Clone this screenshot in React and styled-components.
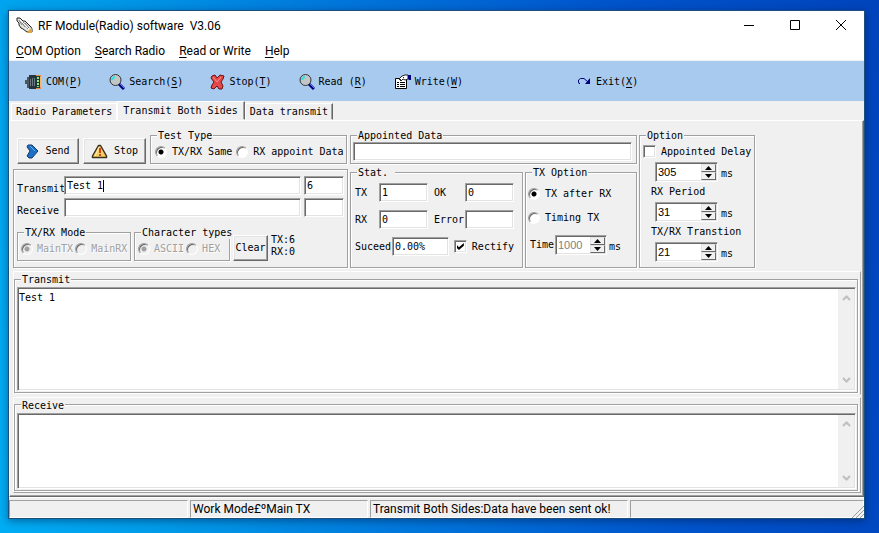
import React, { useState } from 'react';
import styled, { createGlobalStyle, css } from 'styled-components';

const FACE = '#f0f0f0';
const SHADOW = '#a0a0a0';
const DARK = '#696969';
const LIGHT = '#ffffff';
const MIDLIGHT = '#e3e3e3';
const TOOLBAR = '#a8caef';

const MONO = '"DejaVu Sans Mono", "Liberation Mono", monospace';
const UI = 'Roboto, "Noto Sans", sans-serif';
const SANS = '"Liberation Sans", Arial, sans-serif';

const GlobalStyle = createGlobalStyle`
  * {
    box-sizing: border-box;
  }
  body {
    margin: 0;
    color: #000;
    font: 10px/12px ${MONO};
  }
  button, input, textarea {
    margin: 0;
    padding: 0;
    border: 0;
    border-radius: 0;
    color: inherit;
    font: inherit;
    outline: none;
  }
`;

const sunken = css`
  border: 1px solid;
  border-color: ${SHADOW} ${LIGHT} ${LIGHT} ${SHADOW};
  box-shadow: inset 1px 1px 0 ${DARK}, inset -1px -1px 0 ${MIDLIGHT};
`;

const raised = css`
  border: 1px solid;
  border-color: ${LIGHT} ${DARK} ${DARK} ${LIGHT};
  box-shadow: inset -1px -1px 0 ${SHADOW}, inset 1px 1px 0 ${MIDLIGHT};
`;

const etched = css`
  border: 1px solid ${SHADOW};
  box-shadow: inset 1px 1px 0 ${LIGHT}, 1px 1px 0 ${LIGHT};
`;

const Desktop = styled.div`
  display: flex;
  height: 100vh;
  min-height: 520px;
  padding: 10px 14px 14px 8px;
  background: linear-gradient(82deg, #00adf4 0%, #009ae8 18%, #0078dc 42%, #0054cc 72%, #0044bc 100%);
`;

const Window = styled.main`
  display: flex;
  flex: 1;
  flex-direction: column;
  min-width: 0;
  border: 1px solid #1c4f7c;
  background: ${FACE};
  box-shadow: 0 2px 8px rgba(0, 20, 60, 0.45);
`;

const TitleBar = styled.header`
  display: flex;
  align-items: center;
  height: 29px;
  padding-left: 7px;
  background: #fff;
`;

const Title = styled.h1`
  flex: 1;
  margin: 0 0 0 5px;
  font: 12px/16px ${UI};
  white-space: pre;
`;

const CaptionButton = styled.button`
  display: flex;
  align-items: center;
  justify-content: center;
  width: 46px;
  height: 29px;
  background: #fff;
`;

const MenuBar = styled.nav`
  display: flex;
  gap: 14px;
  height: 21px;
  padding: 2px 7px 0;
  border-bottom: 1px solid ${FACE};
  background: #fff;
`;

const MenuItem = styled.button`
  background: none;
  font: 12px/16px ${UI};
  text-align: left;
`;

const ToolBar = styled.div`
  display: flex;
  flex-shrink: 0;
  align-items: center;
  gap: 27px;
  height: 40px;
  padding: 2px 0 0 16px;
  background: ${TOOLBAR};
`;

const ToolButton = styled.button`
  display: flex;
  align-items: center;
  gap: 4px;
  margin-left: ${({ $apart }) => ($apart ? '86px' : '0')};
  background: none;
  white-space: pre;
`;

const Key = styled.u`
  text-underline-offset: 2px;
`;

const TabStrip = styled.div`
  display: flex;
  align-items: flex-end;
  height: 19px;
  padding-left: 2px;
`;

const Tab = styled.button`
  height: ${({ $active }) => ($active ? '19px' : '17px')};
  padding: ${({ $active }) => ($active ? '0 6px 0 5px' : '0 4px')};
  border: 1px solid;
  border-color: ${LIGHT} ${DARK} transparent ${LIGHT};
  border-right-color: ${({ $first }) => ($first ? LIGHT : DARK)};
  background: ${FACE};
  box-shadow: ${({ $first }) => ($first ? 'none' : `inset -1px 0 0 ${SHADOW}`)};
`;

const Page = styled.section`
  display: flex;
  flex: 1;
  flex-direction: column;
  min-height: 0;
  padding: 7px 2px 3px 3px;
  border: 1px solid;
  border-color: ${LIGHT} ${DARK} ${DARK} ${LIGHT};
  box-shadow: inset -1px -1px 0 ${SHADOW};
`;

const Controls = styled.div`
  display: grid;
  flex-shrink: 0;
  grid-template-columns: 335px 173px 112px 116px;
  grid-template-rows: 36px 103px;
  grid-template-areas:
    'actions data data option'
    'link stat txoption option';
  gap: 1px 2px;
`;

const GroupBox = styled.fieldset`
  grid-area: ${({ $area }) => $area || 'auto'};
  display: flex;
  flex: ${({ $grow }) => $grow || '0 0 auto'};
  flex-direction: column;
  min-width: 0;
  min-height: 0;
  margin: 0;
  padding: 0;
  ${etched}
`;

const Legend = styled.legend`
  margin-left: 6px;
  padding: 2px 1px 0;
  background: ${FACE};
  white-space: pre;
`;

const Actions = styled.div`
  grid-area: actions;
  display: flex;
  align-items: flex-end;
  gap: 4px;
  padding: 0 1px 0 4px;
`;

const PushButton = styled.button`
  display: flex;
  align-items: center;
  justify-content: center;
  gap: 6px;
  width: ${({ $width }) => $width}px;
  height: 26px;
  background: ${FACE};
  ${raised}
`;

const TestType = styled(GroupBox)`
  flex: 1;
  height: 36px;
`;

const Choices = styled.div`
  display: flex;
  align-items: center;
  gap: ${({ $gap }) => $gap}px;
  padding: 3px 0 3px ${({ $gap }) => $gap}px;
`;

const Choice = styled.label`
  display: flex;
  align-items: center;
  gap: ${({ $tight }) => ($tight ? '4px' : '5px')};
  height: 13px;
  color: ${({ $off }) => ($off ? SHADOW : 'inherit')};
  text-shadow: ${({ $off }) => ($off ? `1px 1px 0 ${LIGHT}` : 'none')};
  white-space: nowrap;
`;

const RadioDot = styled.input.attrs({ type: 'radio' })`
  flex: none;
  width: 12px;
  height: 12px;
  appearance: none;
  border: 1px solid;
  border-color: ${SHADOW} ${LIGHT} ${LIGHT} ${SHADOW};
  border-radius: 50%;
  background: #fff;
  box-shadow: inset 1px 1px 0 ${DARK};

  &:checked {
    background: radial-gradient(circle, #000 0 2px, #fff 3px);
  }
  &:disabled {
    background: ${FACE};
  }
  &:disabled:checked {
    background: radial-gradient(circle, ${SHADOW} 0 2px, ${FACE} 3px);
  }
`;

const TickBox = styled.input.attrs({ type: 'checkbox' })`
  display: flex;
  align-items: center;
  justify-content: center;
  flex: none;
  width: 13px;
  height: 13px;
  appearance: none;
  background: #fff;
  ${sunken}

  &:checked::after {
    content: '';
    width: 7px;
    height: 7px;
    background: #000;
    clip-path: polygon(0 30%, 30% 60%, 100% 0, 100% 40%, 30% 100%, 0 70%);
  }
`;

const LinkPanel = styled.div`
  grid-area: link;
  display: flex;
  flex-direction: column;
  gap: 3px;
  align-self: end;
  height: 99px;
  padding: 6px 3px 0;
  ${etched}
`;

const LineRow = styled.div`
  display: grid;
  grid-template-columns: 47px 1fr 40px;
  align-items: center;
`;

const LineLabel = styled.label`
  padding-top: 6px;
`;

const Field = styled.div`
  position: relative;
  display: flex;
  padding-right: 3px;
`;

const TextBox = styled.input`
  width: 100%;
  min-width: 0;
  height: 19px;
  padding: 0 2px 1px;
  background: #fff;
  ${sunken}
`;

const Caret = styled.span`
  position: absolute;
  top: 4px;
  left: calc(3px + 6ch);
  width: 1px;
  height: 12px;
  background: #000;
`;

const ModeRow = styled.div`
  display: flex;
  align-items: flex-end;
  gap: 3px;
  padding-top: 5px;
`;

const ModeBox = styled(GroupBox)`
  width: ${({ $width }) => $width}px;
  height: 36px;
`;

const ModeChoices = styled(Choices)`
  padding-left: 3px;
`;

const Counter = styled.output`
  padding-bottom: 3px;
  white-space: pre;
`;

const DataBody = styled.div`
  padding: 0 4px 0 2px;
`;

const StatBody = styled.div`
  display: flex;
  flex-direction: column;
  gap: 8px;
  padding: 4px 8px 0 4px;
`;

const StatPair = styled.div`
  display: flex;
  align-items: center;
`;

const StatLabel = styled.label`
  flex: none;
  width: ${({ $width }) => $width}px;
`;

const StatLine = styled.div`
  display: flex;
  align-items: center;
  justify-content: space-between;
`;

const StatBox = styled(TextBox)`
  width: ${({ $width }) => $width}px;
`;

const TxOptionBody = styled.div`
  display: flex;
  flex-direction: column;
  gap: 11px;
  padding: 8px 0 0 2px;
`;

const SpinLine = styled.div`
  display: flex;
  align-items: center;
  gap: ${({ $gap }) => $gap}px;
  padding-left: ${({ $indent }) => $indent}px;
`;

const Unit = styled.span`
  padding-top: 3px;
`;

const SpinFrame = styled.div`
  display: flex;
  width: ${({ $width }) => $width}px;
  height: 20px;
  padding: 1px;
  background: #fff;
  ${sunken}
`;

const SpinInput = styled.input`
  flex: 1;
  min-width: 0;
  margin: 1px;
  background: #fff;
  font: 11px/14px ${SANS};

  &:disabled {
    color: #808080;
  }
`;

const SpinButtons = styled.div`
  display: grid;
  grid-template-rows: 1fr 1fr;
  width: 15px;
`;

const SpinButton = styled.button`
  display: flex;
  align-items: center;
  justify-content: center;
  min-height: 0;
  border: 1px solid;
  border-color: ${MIDLIGHT} ${DARK} ${DARK} ${MIDLIGHT};
  background: ${FACE};
`;

const OptionBody = styled.div`
  display: flex;
  flex-direction: column;
  gap: 4px;
  padding: 3px 0 0 3px;
`;

const OptionLabel = styled.label`
  padding-left: 8px;
`;

const Memos = styled.div`
  display: flex;
  flex: 1;
  flex-direction: column;
  gap: 2px;
  min-height: 0;
  padding-top: 3px;
`;

const MemoPanel = styled.div`
  display: flex;
  flex: ${({ $grow }) => $grow} 1 0;
  min-height: 0;
  padding: 0 2px 1px 0;
  border: 1px solid;
  border-color: ${LIGHT} ${SHADOW} ${({ $last }) => ($last ? SHADOW : FACE)} ${LIGHT};
`;

const MemoFrame = styled.div`
  display: flex;
  flex: 1;
  min-height: 0;
  margin: 1px 1px 1px 2px;
  padding: 1px;
  background: #fff;
  ${sunken}
`;

const MemoText = styled.textarea`
  flex: 1;
  padding: 3px 0;
  overflow: hidden;
  background: #fff;
  resize: none;
`;

const MemoScroll = styled.div`
  display: flex;
  flex-direction: column;
  justify-content: space-between;
  width: 16px;
  background: ${FACE};
`;

const ScrollButton = styled.button`
  display: flex;
  align-items: center;
  justify-content: center;
  height: 18px;
  background: none;
`;

const StatusBar = styled.footer`
  position: relative;
  display: grid;
  grid-template-columns: 179px 178px 258px 1fr;
  flex-shrink: 0;
  gap: 2px;
  height: 21px;
  padding-top: 2px;
  border-top: 1px solid ${LIGHT};
`;

const StatusCell = styled.div`
  padding-left: 2px;
  overflow: hidden;
  border: 1px solid;
  border-color: ${SHADOW} ${LIGHT} ${LIGHT} ${SHADOW};
  font: 12px/16px ${UI};
  white-space: nowrap;
`;

const Grip = styled.svg`
  position: absolute;
  right: 0;
  bottom: 0;
`;

const AppIcon = () => (
  <svg width="17" height="17" viewBox="0 0 17 17" aria-hidden="true">
    <path d="M1 1H4L7 4L9 4L15 10L16 12V15H11L7 12L5 11L3 8V6L1 4Z" fill="#e4e4e0" stroke="#222" />
    <path d="M3 3l3 5M5 4l4 6M7 5l5 7M9 6l4 5" stroke="#7a7a78" />
    <path d="M4 3l9 9" stroke="#fff" />
    <path d="M11 16l2-3 3-2v5z" fill="#e0a63a" />
  </svg>
);

const PortIcon = () => (
  <svg width="17" height="16" viewBox="0 0 17 16" aria-hidden="true">
    <path d="M0 6h3v4H0z" fill="#4d565c" />
    <path d="M2 3h4v11H2z" fill="#4d565c" />
    <path d="M4 1h8v14H4z" fill="#27343b" />
    <path d="M5 5h1v7H5zM7 4h1v8H7zM9 4h1v8H9z" fill="#6d7c84" />
    <path d="M11 1h5v14h-5z" fill="#e98b4d" />
    <path d="M11 2h4v12h-4z" fill="#193d35" />
    <path d="M12 3h2v2h-2zM12 6h2v2h-2zM12 9h2v2h-2zM12 12h2v1h-2z" fill="#8fe87c" />
    <path d="M15 3h1v10h-1z" fill="#ffb070" />
  </svg>
);

const LensIcon = () => (
  <svg width="16" height="16" viewBox="0 0 16 16" aria-hidden="true">
    <path d="M10 10l5 5" stroke="#000080" strokeWidth="3" />
    <path d="M11 10l4 4" stroke="#6f74e0" />
    <circle cx="6.5" cy="6" r="5.5" fill="#c2c6c6" stroke="#333" />
    <path d="M3 6a3.500 3.500 0 0 1 3-3" fill="none" stroke="#35e0e0" strokeWidth="2" />
  </svg>
);

const CrossIcon = () => (
  <svg width="15" height="16" viewBox="0 0 15 16" aria-hidden="true">
    <path
      d="M2 2L5 1L7 4L10 1L14 2L13 5L11 8L13 12L12 15H9L7 12L4 15L1 14L2 11L4 8L1 4Z"
      fill="#e54848"
      stroke="#6c1010"
    />
    <path d="M3 3l4 5 4-5" fill="none" stroke="#ff8c80" />
  </svg>
);

const SheetIcon = () => (
  <svg width="17" height="16" viewBox="0 0 17 16" aria-hidden="true">
    <path d="M1.500 4.500h11v10h-11z" fill="#fff" stroke="#000" />
    <path d="M3 8.500h2M6 8.500h5M3 10.500h2M6 10.500h5M3 12.500h2M6 12.500h5" stroke="#000" />
    <path d="M5 5l3-3 3-1h3v4l-3 1-2-1-2 2z" fill="#fff" stroke="#222" />
    <path d="M6 6l1-1M8 6l1-1M9 4l1-1" stroke="#222" />
    <path d="M14 1h3v5h-2l-1-1z" fill="#000080" />
  </svg>
);

const RedoIcon = () => (
  <svg width="16" height="16" viewBox="0 0 16 16" aria-hidden="true">
    <path d="M4 9.500H3L2.500 8V6L4.500 4.500H8L12 8" fill="none" stroke="#000080" />
    <path d="M14 4v6H9z" fill="#000080" />
  </svg>
);

const ChevronIcon = () => (
  <svg width="13" height="15" viewBox="0 0 13 15" aria-hidden="true">
    <path d="M2 1h4l6 6-6 7H3L1 12l3-5-3-4z" fill="#1c6fc4" stroke="#123a70" />
    <path d="M4 2l5 5" stroke="#5fb0f0" />
  </svg>
);

const WarningIcon = () => (
  <svg width="17" height="15" viewBox="0 0 17 15" aria-hidden="true">
    <path d="M7.500 1.500h2L15.500 12v1.500h-14V12z" fill="#f5cf63" stroke="#3a3020" strokeWidth="1.5" strokeLinejoin="round" />
    <path d="M8 3L4 12" stroke="#fff0b8" />
    <path d="M8 4h2v5H8zM8 10h2v2H8z" fill="#d0451b" />
  </svg>
);

const Arrow = ({ down }) => (
  <svg width="7" height="4" viewBox="0 0 7 4" aria-hidden="true">
    <path d={down ? 'M0 0h7L3.500 4z' : 'M0 4h7L3.500 0z'} fill="#000" />
  </svg>
);

const ScrollArrow = ({ down }) => (
  <svg width="9" height="6" viewBox="0 0 9 6" aria-hidden="true">
    <path d={down ? 'M1 1l3.500 3.500L8 1' : 'M1 5l3.500-3.500L8 5'} fill="none" stroke="#bfbfbf" strokeWidth="2" />
  </svg>
);

const Radio = ({ name, label, defaultChecked, disabled, tight }) => (
  <Choice $off={disabled} $tight={tight}>
    <RadioDot name={name} defaultChecked={defaultChecked} disabled={disabled} />
    {label}
  </Choice>
);

const Spinner = ({ id, start, width, disabled }) => {
  const [value, setValue] = useState(start);
  return (
    <SpinFrame $width={width}>
      <SpinInput id={id} value={value} disabled={disabled} onChange={(e) => setValue(e.target.value)} />
      <SpinButtons>
        <SpinButton aria-label="Increase" disabled={disabled} onClick={() => setValue(Number(value) + 1)}>
          <Arrow />
        </SpinButton>
        <SpinButton aria-label="Decrease" disabled={disabled} onClick={() => setValue(Number(value) - 1)}>
          <Arrow down />
        </SpinButton>
      </SpinButtons>
    </SpinFrame>
  );
};

const DelayLine = ({ id, start }) => (
  <SpinLine $gap={3} $indent={12}>
    <Spinner id={id} start={start} width={63} />
    <Unit>ms</Unit>
  </SpinLine>
);

const Stat = ({ id, label, labelWidth, width, value }) => (
  <StatPair>
    <StatLabel htmlFor={id} $width={labelWidth}>{label}</StatLabel>
    <StatBox id={id} $width={width} defaultValue={value} />
  </StatPair>
);

const Memo = ({ title, grow, last, text }) => (
  <MemoPanel $grow={grow} $last={last}>
    <GroupBox $grow="1">
      <Legend>{title}</Legend>
      <MemoFrame>
        <MemoText aria-label={title} defaultValue={text} />
        <MemoScroll>
          <ScrollButton aria-label="Scroll up"><ScrollArrow /></ScrollButton>
          <ScrollButton aria-label="Scroll down"><ScrollArrow down /></ScrollButton>
        </MemoScroll>
      </MemoFrame>
    </GroupBox>
  </MemoPanel>
);

const TOOLS = [
  { icon: PortIcon, text: 'COM', mnemonic: 'P' },
  { icon: LensIcon, text: 'Search', mnemonic: 'S' },
  { icon: CrossIcon, text: 'Stop', mnemonic: 'T' },
  { icon: LensIcon, text: 'Read ', mnemonic: 'R' },
  { icon: SheetIcon, text: 'Write', mnemonic: 'W' },
  { icon: RedoIcon, text: 'Exit', mnemonic: 'X', apart: true },
];

const MENUS = ['COM Option', 'Search Radio', 'Read or Write', 'Help'];

export default function App() {
  return (
    <Desktop>
      <GlobalStyle />
      <Window>
        <TitleBar>
          <AppIcon />
          <Title>{'RF Module(Radio) software  V3.06'}</Title>
          <CaptionButton aria-label="Minimize">
            <svg width="11" height="11"><path d="M0 5.500h10" stroke="#000" /></svg>
          </CaptionButton>
          <CaptionButton aria-label="Maximize">
            <svg width="11" height="11"><path d="M.5.5h9v9h-9z" fill="none" stroke="#000" /></svg>
          </CaptionButton>
          <CaptionButton aria-label="Close">
            <svg width="11" height="11"><path d="M0 0l10 10M10 0L0 10" stroke="#000" /></svg>
          </CaptionButton>
        </TitleBar>

        <MenuBar>
          {MENUS.map((menu) => (
            <MenuItem key={menu}><Key>{menu[0]}</Key>{menu.slice(1)}</MenuItem>
          ))}
        </MenuBar>

        <ToolBar>
          {TOOLS.map(({ icon: Icon, text, mnemonic, apart }) => (
            <ToolButton key={text} $apart={apart}>
              <Icon />
              <span>{text}(<Key>{mnemonic}</Key>)</span>
            </ToolButton>
          ))}
        </ToolBar>

        <TabStrip role="tablist">
          <Tab role="tab" $first>Radio Parameters</Tab>
          <Tab role="tab" aria-selected="true" $active>Transmit Both Sides</Tab>
          <Tab role="tab">Data transmit</Tab>
        </TabStrip>

        <Page>
          <Controls>
            <Actions>
              <PushButton $width={62}><ChevronIcon />Send</PushButton>
              <PushButton $width={63}><WarningIcon />Stop</PushButton>
              <TestType>
                <Legend>Test Type</Legend>
                <Choices $gap={4}>
                  <Radio name="test" label="TX/RX Same" defaultChecked />
                  <Radio name="test" label="RX appoint Data" />
                </Choices>
              </TestType>
            </Actions>

            <GroupBox $area="data">
              <Legend>Appointed Data</Legend>
              <DataBody>
                <TextBox aria-label="Appointed Data" />
              </DataBody>
            </GroupBox>

            <LinkPanel>
              <LineRow>
                <LineLabel htmlFor="tx-text">Transmit</LineLabel>
                <Field>
                  <TextBox id="tx-text" defaultValue="Test 1" />
                  <Caret />
                </Field>
                <TextBox aria-label="Transmit length" defaultValue="6" />
              </LineRow>
              <LineRow>
                <LineLabel htmlFor="rx-text">Receive</LineLabel>
                <Field>
                  <TextBox id="rx-text" />
                </Field>
                <TextBox aria-label="Receive length" />
              </LineRow>
              <ModeRow>
                <ModeBox $width={114}>
                  <Legend>TX/RX Mode</Legend>
                  <ModeChoices $gap={2}>
                    <Radio name="mode" label="MainTX" defaultChecked disabled tight />
                    <Radio name="mode" label="MainRX" disabled tight />
                  </ModeChoices>
                </ModeBox>
                <ModeBox $width={96}>
                  <Legend>Character types</Legend>
                  <ModeChoices $gap={2}>
                    <Radio name="chars" label="ASCII" defaultChecked disabled tight />
                    <Radio name="chars" label="HEX" disabled tight />
                  </ModeChoices>
                </ModeBox>
                <PushButton $width={35}>Clear</PushButton>
                <Counter>{'TX:6\nRX:0'}</Counter>
              </ModeRow>
            </LinkPanel>

            <GroupBox $area="stat">
              <Legend>{'Stat. '}</Legend>
              <StatBody>
                <StatLine>
                  <Stat id="stat-tx" label="TX" labelWidth={24} width={49} value="1" />
                  <Stat id="stat-ok" label="OK" labelWidth={31} width={49} value="0" />
                </StatLine>
                <StatLine>
                  <Stat id="stat-rx" label="RX" labelWidth={24} width={49} value="0" />
                  <Stat id="stat-error" label="Error" labelWidth={31} width={49} />
                </StatLine>
                <StatLine>
                  <Stat id="stat-suceed" label="Suceed" labelWidth={37} width={57} value="0.00%" />
                  <Choice>
                    <TickBox defaultChecked />
                    Rectify
                  </Choice>
                </StatLine>
              </StatBody>
            </GroupBox>

            <GroupBox $area="txoption">
              <Legend>TX Option</Legend>
              <TxOptionBody>
                <Radio name="txoption" label="TX after RX" defaultChecked />
                <Radio name="txoption" label="Timing TX" />
                <SpinLine $gap={2} $indent={2}>
                  <StatPair>
                    <StatLabel htmlFor="time" $width={25}>Time</StatLabel>
                    <Spinner id="time" start="1000" width={52} disabled />
                  </StatPair>
                  <Unit>ms</Unit>
                </SpinLine>
              </TxOptionBody>
            </GroupBox>

            <GroupBox $area="option">
              <Legend>Option</Legend>
              <OptionBody>
                <Choice>
                  <TickBox />
                  Appointed Delay
                </Choice>
                <DelayLine id="delay" start="305" />
                <OptionLabel htmlFor="period">RX Period</OptionLabel>
                <DelayLine id="period" start="31" />
                <OptionLabel htmlFor="transtion">TX/RX Transtion</OptionLabel>
                <DelayLine id="transtion" start="21" />
              </OptionBody>
            </GroupBox>
          </Controls>

          <Memos>
            <Memo title="Transmit" grow={125} text="Test 1" />
            <Memo title="Receive" grow={97} last />
          </Memos>
        </Page>

        <StatusBar>
          <StatusCell />
          <StatusCell>Work Mode£ºMain TX</StatusCell>
          <StatusCell>Transmit Both Sides:Data have been sent ok!</StatusCell>
          <StatusCell />
          <Grip width="12" height="12" aria-hidden="true">
            <path d="M0 12L12 0M4 12l8-8M8 12l4-4" stroke={SHADOW} />
          </Grip>
        </StatusBar>
      </Window>
    </Desktop>
  );
}
